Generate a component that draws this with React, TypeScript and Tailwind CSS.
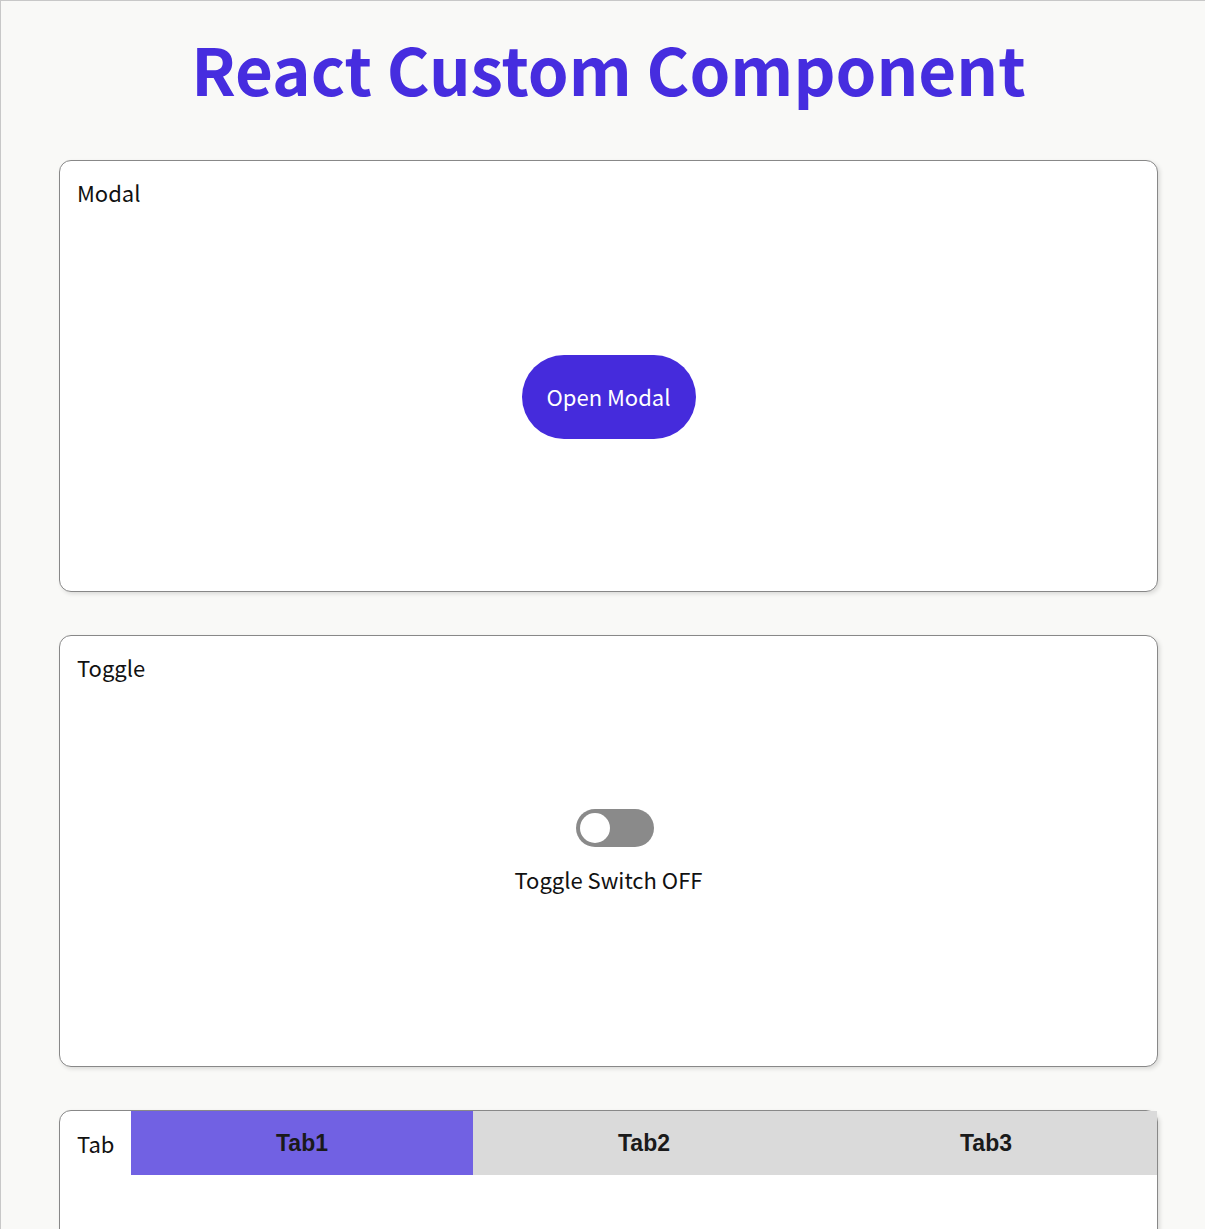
import { useState } from "react";

const sans = "font-['Noto_Sans_CJK_KR','Noto_Sans',sans-serif]";

const Card = ({ title, children }: { title: string; children: React.ReactNode }) => (
  <section className="flex flex-col h-[432px] bg-white border border-[#888] rounded-xl shadow-[2px_2px_4px_rgba(0,0,0,0.12)]">
    <div className="h-[63px] flex items-center pl-[17px] text-[22px] text-[#111]">{title}</div>
    {children}
  </section>
);

const App = () => {
  const [on, setOn] = useState(false);
  const [tab, setTab] = useState(0);
  const tabs = ["Tab1", "Tab2", "Tab3"];

  return (
    <div className={`min-h-screen bg-[#f9f9f7] border-l border-t border-[#c8c8c8] ${sans}`}>
      <div className="ml-[58px] w-[1099px] pt-[34px] pb-10">
        <h1 className="text-center text-[65.4px] leading-none font-bold text-[#462ddf] mb-[60px]">
          React Custom Component
        </h1>

        <div className="flex flex-col gap-[43px]">
          <Card title="Modal">
            <div className="flex-1 flex items-center justify-center pb-[22px]">
              <button className="w-[174px] h-[84px] rounded-full bg-[#452bdc] text-white text-[22px]">
                Open Modal
              </button>
            </div>
          </Card>

          <Card title="Toggle">
            <div className="flex-1 flex flex-col items-center justify-center pb-[60px]">
              <button
                onClick={() => setOn(!on)}
                className={`ml-3 w-[78px] h-[38px] rounded-full p-1 flex ${on ? "bg-[#452bdc] justify-end" : "bg-[#8a8a8a] justify-start"}`}
              >
                <span className="w-[30px] h-[30px] rounded-full bg-white" />
              </button>
              <p className="mt-4 text-[22px] text-[#111]">Toggle Switch {on ? "ON" : "OFF"}</p>
            </div>
          </Card>

          <section className="h-[432px] bg-white border border-[#888] rounded-xl shadow-[2px_2px_4px_rgba(0,0,0,0.12)]">
            <div className="flex">
              <div className="w-[71px] h-[64px] flex items-center pl-[17px] text-[22px] text-[#111]">Tab</div>
              <div className="flex-1 grid grid-cols-3">
                {tabs.map((t, i) => (
                  <button
                    key={t}
                    onClick={() => setTab(i)}
                    className={`h-[64px] font-['Liberation_Sans',Arial,sans-serif] font-bold text-[23px] text-[#1a1a1a] ${i === tab ? "bg-[#7161e3]" : "bg-[#dadada]"}`}
                  >
                    {t}
                  </button>
                ))}
              </div>
            </div>
          </section>
        </div>
      </div>
    </div>
  );
};

export default App;
